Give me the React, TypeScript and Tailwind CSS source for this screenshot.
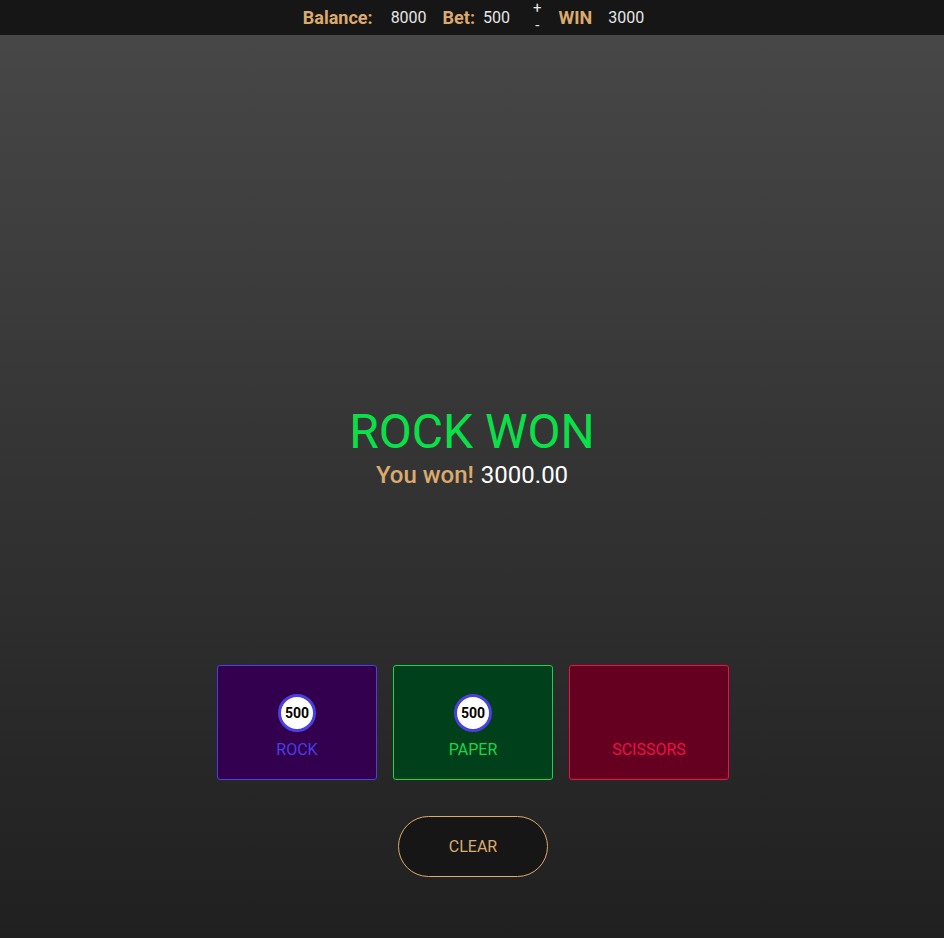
const font = { fontFamily: 'Roboto, "Liberation Sans", sans-serif' };

type Choice = { name: string; bet: number | null; bg: string; border: string; text: string };

const choices: Choice[] = [
  { name: 'ROCK', bet: 500, bg: 'bg-[#33004f]', border: 'border-[#4a3ee6]', text: 'text-[#4a3ee6]' },
  { name: 'PAPER', bet: 500, bg: 'bg-[#00401a]', border: 'border-[#14d84a]', text: 'text-[#14d84a]' },
  { name: 'SCISSORS', bet: null, bg: 'bg-[#660020]', border: 'border-[#ee1048]', text: 'text-[#ee1048]' },
];

function Header() {
  return (
    <div className="h-[35px] bg-[#161616] flex items-center justify-center text-[#e6e6e6] pl-[3px]">
      <span className="text-[18px] font-bold text-[#dcaa6c]">Balance:</span>
      <span className="text-[16px] ml-[18px]">8000</span>
      <span className="text-[18px] font-bold text-[#dcaa6c] ml-[16px]">Bet:</span>
      <span className="text-[16px] ml-[8px]">500</span>
      <div className="flex flex-col items-center ml-[23px] text-[15px] leading-[17px] -mt-[2px]">
        <span>+</span>
        <span>-</span>
      </div>
      <span className="text-[18px] font-bold text-[#dcaa6c] ml-[17px]">WIN</span>
      <span className="text-[16px] ml-[16px]">3000</span>
    </div>
  );
}

function Card({ c }: { c: Choice }) {
  return (
    <div className={`w-[160px] h-[115px] rounded-[3px] border ${c.bg} ${c.border} flex flex-col items-center pt-[28px]`}>
      {c.bet !== null ? (
        <div className="w-[38px] h-[38px] rounded-full bg-white border-[3px] border-[#4a40e0] flex items-center justify-center text-[14px] font-bold text-black">
          {c.bet}
        </div>
      ) : (
        <div className="h-[38px]" />
      )}
      <span className={`mt-[6px] text-[16px] leading-[24px] ${c.text}`}>{c.name}</span>
    </div>
  );
}

export default function App() {
  return (
    <div style={font} className="w-full min-h-[938px] flex flex-col">
      <Header />
      <div className="flex-1 bg-gradient-to-b from-[#474747] to-[#202020] flex flex-col items-center pt-[369px]">
        <div className="text-[48px] leading-[56px] text-[#0ae048]">ROCK WON</div>
        <div className="text-[24px] leading-[30px]">
          <span className="font-medium text-[#dcaa6c]">You won!</span>
          <span className="text-white ml-[7px]">3000.00</span>
        </div>
        <div className="flex gap-[16px] mt-[175px] pl-[2px]">
          {choices.map((c) => (
            <Card key={c.name} c={c} />
          ))}
        </div>
        <button className="mt-[36px] ml-[2px] w-[150px] h-[61px] rounded-full border border-[#dcaa6c] bg-[#161616] text-[#dcaa6c] text-[16px]">
          CLEAR
        </button>
      </div>
    </div>
  );
}
